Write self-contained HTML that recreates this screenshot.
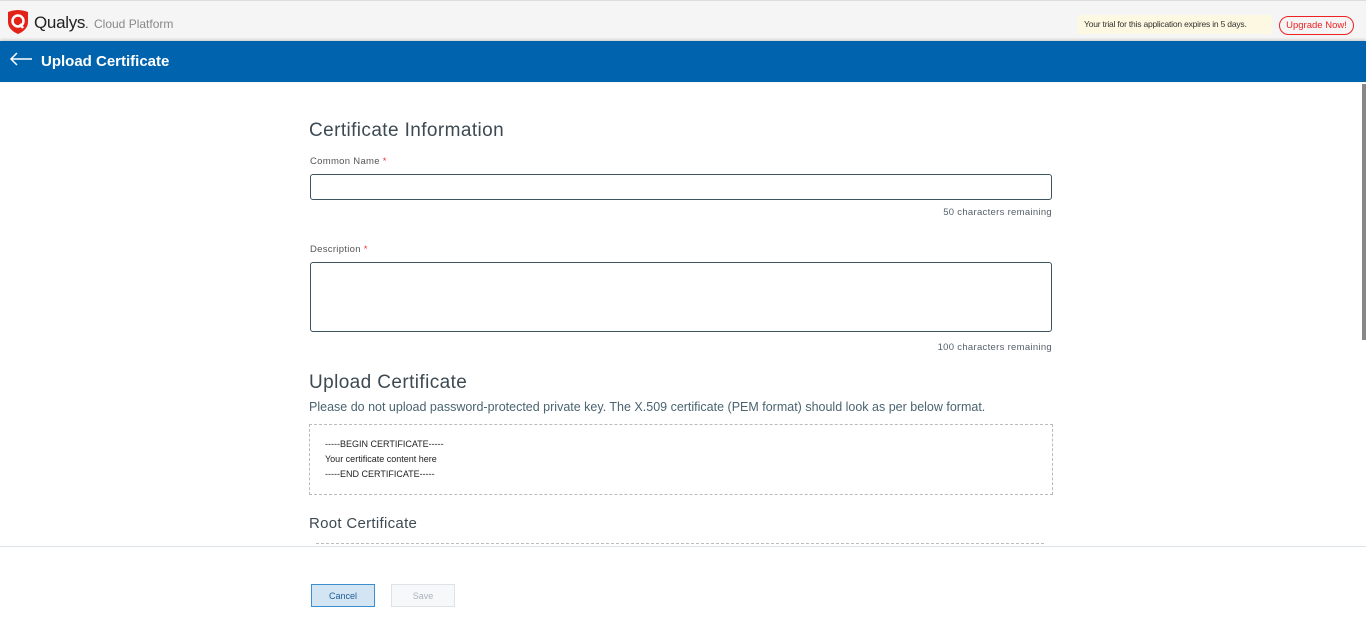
<!DOCTYPE html>
<html><head><style>
*{box-sizing:border-box;margin:0;padding:0}
body{width:1366px;height:628px;overflow:hidden;font-family:"Liberation Sans",sans-serif;background:#fff;position:relative}
.top{position:absolute;left:0;top:0;width:1366px;height:41px;background:#f5f5f5;border-top:1px solid #ddd}
.logo{position:absolute;left:7px;top:8px}
.qtxt{position:absolute;left:34px;top:12px;font-size:17px;color:#222;letter-spacing:-0.3px}
.cp{position:absolute;left:94px;top:16px;font-size:12px;color:#888}
.trial{position:absolute;left:1078px;top:14px;width:194px;height:19px;background:#fdf8e1;font-size:8.5px;color:#333;padding:4px 6px;white-space:nowrap;letter-spacing:-0.2px}
.up{position:absolute;left:1279px;top:15px;width:75px;height:19px;border:1px solid #e22;border-radius:10px;color:#e22;font-size:9.5px;text-align:center;line-height:17px}
.bar{position:absolute;left:0;top:41px;width:1366px;height:41px;background:#0063ae;box-shadow:0 -1px 3px rgba(0,0,0,.2)}
.bar span{position:absolute;left:41px;top:12px;color:#fff;font-size:15px;font-weight:bold}
.t{position:absolute;color:#3d4a52}
h2{position:absolute;font-weight:normal;font-size:19px;color:#3d4a52;letter-spacing:0.4px}
.lbl{position:absolute;font-size:9.5px;color:#555;letter-spacing:0.3px}
.lbl b{color:#e33;font-weight:normal}
.inp{position:absolute;border:1px solid #3d5560;border-radius:3px}
.rem{position:absolute;font-size:9.5px;color:#55606a;right:314px;letter-spacing:0.3px}
.box{position:absolute;border:1px dashed #bbb;font-size:9px;color:#222;line-height:15px;padding:12px 15px}
.foot{position:absolute;left:0;top:546px;width:1366px;height:82px;background:#fff;border-top:1px solid #dde2e6}
.btn{position:absolute;top:37px;width:64px;height:23px;font-size:9px;text-align:center;line-height:23px}
.sb{position:absolute;left:1362px;top:84px;width:4px;height:256px;background:#888}
</style></head><body>
<div class="top">
<svg class="logo" width="22" height="26" viewBox="0 0 22 26"><path d="M11 1C6 1 1 3 1 3v10c0 6 5 10 10 12 5-2 10-6 10-12V3S16 1 11 1z" fill="#e2231a"/><circle cx="11" cy="12" r="5.5" fill="none" stroke="#fff" stroke-width="2.5"/><path d="M13 15l3 4" stroke="#fff" stroke-width="2.5"/></svg>
<span class="qtxt">Qualys<span style="font-size:12px">.</span></span><span class="cp">Cloud Platform</span>
<div class="trial">Your trial for this application expires in 5 days.</div>
<div class="up">Upgrade Now!</div>
</div>
<div class="bar"><svg style="position:absolute;left:9px;top:11px" width="24" height="14" viewBox="0 0 24 14"><path d="M23 7H2M8 1L2 7l6 6" fill="none" stroke="#fff" stroke-width="1.5"/></svg><span>Upload Certificate</span></div>
<div class="sb"></div>
<h2 style="left:309px;top:120px">Certificate Information</h2>
<div class="lbl" style="left:310px;top:156px">Common Name <b>*</b></div>
<div class="inp" style="left:310px;top:174px;width:742px;height:26px"></div>
<div class="rem" style="top:207px">50 characters remaining</div>
<div class="lbl" style="left:310px;top:244px">Description <b>*</b></div>
<div class="inp" style="left:310px;top:262px;width:742px;height:70px"></div>
<div class="rem" style="top:342px">100 characters remaining</div>
<h2 style="left:309px;top:372px">Upload Certificate</h2>
<div class="t" style="left:309px;top:400px;font-size:12.5px;color:#4a6470">Please do not upload password-protected private key. The X.509 certificate (PEM format) should look as per below format.</div>
<div class="box" style="left:309px;top:424px;width:744px;height:71px">-----BEGIN CERTIFICATE-----<br>Your certificate content here<br>-----END CERTIFICATE-----</div>
<div style="position:absolute;left:309px;top:515px;font-size:15px;color:#3d4a52;letter-spacing:0.3px">Root Certificate</div>
<div style="position:absolute;left:316px;top:543px;width:728px;border-top:1px dashed #bbb"></div>
<div class="foot">
<div class="btn" style="left:311px;background:#d3e5f3;border:1px solid #3b8fd0;color:#1d5d95">Cancel</div>
<div class="btn" style="left:391px;background:#f7f8f9;border:1px solid #dde2e5;color:#aab4bb">Save</div>
</div>
</body></html>
